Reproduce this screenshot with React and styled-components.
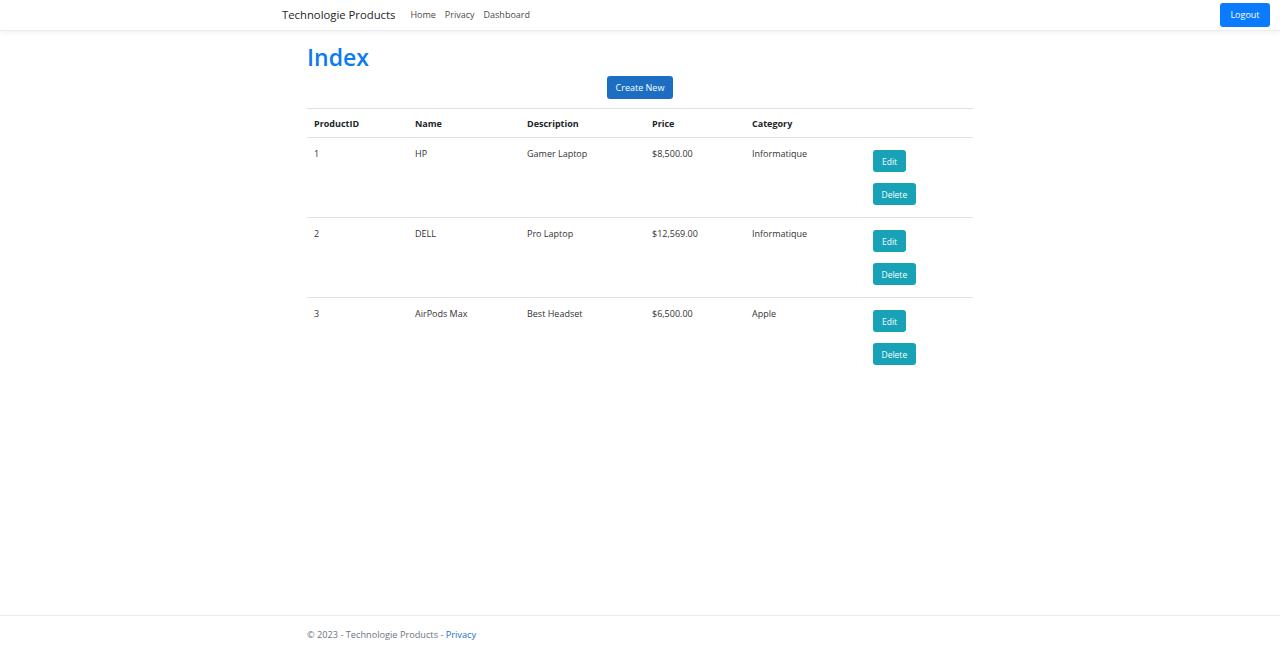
import styled, { createGlobalStyle } from "styled-components";

const GlobalStyle = createGlobalStyle`
  html, body {
    margin: 0;
    padding: 0;
    background: #fff;
    font-family: "Open Sans", "Liberation Sans", sans-serif;
    color: #212529;
  }
  #root {
    min-height: 646px;
  }
`;

const Page = styled.div`
  min-height: 646px;
  display: flex;
  flex-direction: column;
`;

const NavBar = styled.nav`
  height: 30px;
  display: grid;
  grid-template-columns: 1fr 716px 1fr;
  align-items: center;
  border-bottom: 1px solid #e9ecef;
  box-shadow: 0 2px 6px rgba(0, 0, 0, 0.05);
`;

const NavInner = styled.div`
  grid-column: 2;
  display: flex;
  align-items: center;
  margin-top: -1px;
`;

const Brand = styled.a`
  font-size: 11.3px;
  color: #212529;
  margin-right: 15px;
  white-space: nowrap;
`;

const NavLinks = styled.ul`
  list-style: none;
  margin: 0;
  padding: 0;
  display: flex;
  gap: 9px;
  li {
    font-size: 9px;
    color: #4a4a4a;
  }
`;

const NavEnd = styled.div`
  grid-column: 3;
  display: flex;
  justify-content: flex-end;
  padding-right: 10px;
`;

const LogoutBtn = styled.button`
  background: #0a7bff;
  color: #fff;
  border: none;
  border-radius: 3px;
  font-family: inherit;
  font-size: 9px;
  width: 50px;
  height: 24px;
  margin-top: -1px;
`;

const Main = styled.main`
  width: 666px;
  margin: 0 auto;
  flex: 1;
`;

const Title = styled.h1`
  margin: 11px 0 4px;
  font-size: 23px;
  font-weight: 600;
  color: #0d7bf0;
  line-height: 30px;
`;

const Actions = styled.p`
  margin: 0 0 9px;
  display: flex;
  justify-content: center;
`;

const PrimaryBtn = styled.button`
  background: #1b6ec2;
  color: #fff;
  border: none;
  border-radius: 3px;
  font-family: inherit;
  font-size: 9px;
  width: 66px;
  height: 23px;
`;

const Table = styled.table`
  width: 100%;
  border-collapse: collapse;
  font-size: 9px;
  border-top: 1px solid #dee2e6;

  th {
    font-weight: 700;
    text-align: left;
    height: 28px;
    padding: 0 7px;
    border-bottom: 1px solid #dee2e6;
  }
  td {
    vertical-align: top;
    padding: 9px 7px 0;
    height: 70px;
    color: #333;
  }
  tbody tr:not(:last-child) td {
    border-bottom: 1px solid #dee2e6;
  }
`;

const BtnStack = styled.div`
  display: flex;
  flex-direction: column;
  align-items: flex-start;
  gap: 11px;
  padding-top: 3px;
`;

const InfoBtn = styled.button`
  background: #17a2b8;
  color: #fff;
  border: none;
  border-radius: 3px;
  font-family: inherit;
  font-size: 8.5px;
  height: 22px;
  padding: 0 ${({ $pad }) => $pad}px;
`;

const Footer = styled.footer`
  border-top: 1px solid #e9ecef;
  height: 30px;
  display: flex;
  align-items: center;
  font-size: 9.2px;
  color: #6c757d;
`;

const FooterInner = styled.div`
  width: 666px;
  margin: 0 auto;
  padding-top: 7px;
  a {
    color: #1a6fd1;
    text-decoration: none;
  }
`;

const columns = [
  { label: "ProductID", width: 101 },
  { label: "Name", width: 112 },
  { label: "Description", width: 125 },
  { label: "Price", width: 100 },
  { label: "Category", width: 121 },
  { label: "", width: 107 },
];

const products = [
  { id: 1, name: "HP", description: "Gamer Laptop", price: "$8,500.00", category: "Informatique" },
  { id: 2, name: "DELL", description: "Pro Laptop", price: "$12,569.00", category: "Informatique" },
  { id: 3, name: "AirPods Max", description: "Best Headset", price: "$6,500.00", category: "Apple" },
];

export default function App() {
  return (
    <Page>
      <GlobalStyle />
      <NavBar>
        <NavInner>
          <Brand>Technologie Products</Brand>
          <NavLinks>
            <li>Home</li>
            <li>Privacy</li>
            <li>Dashboard</li>
          </NavLinks>
        </NavInner>
        <NavEnd>
          <LogoutBtn>Logout</LogoutBtn>
        </NavEnd>
      </NavBar>
      <Main>
        <Title>Index</Title>
        <Actions>
          <PrimaryBtn>Create New</PrimaryBtn>
        </Actions>
        <Table>
          <colgroup>
            {columns.map((c, i) => (
              <col key={i} style={{ width: c.width }} />
            ))}
          </colgroup>
          <thead>
            <tr>
              {columns.map((c, i) => (
                <th key={i}>{c.label}</th>
              ))}
            </tr>
          </thead>
          <tbody>
            {products.map((p) => (
              <tr key={p.id}>
                <td>{p.id}</td>
                <td>{p.name}</td>
                <td>{p.description}</td>
                <td>{p.price}</td>
                <td>{p.category}</td>
                <td>
                  <BtnStack>
                    <InfoBtn $pad={9}>Edit</InfoBtn>
                    <InfoBtn $pad={8.5}>Delete</InfoBtn>
                  </BtnStack>
                </td>
              </tr>
            ))}
          </tbody>
        </Table>
      </Main>
      <Footer>
        <FooterInner>
          © 2023 - Technologie Products - <a href="#">Privacy</a>
        </FooterInner>
      </Footer>
    </Page>
  );
}
